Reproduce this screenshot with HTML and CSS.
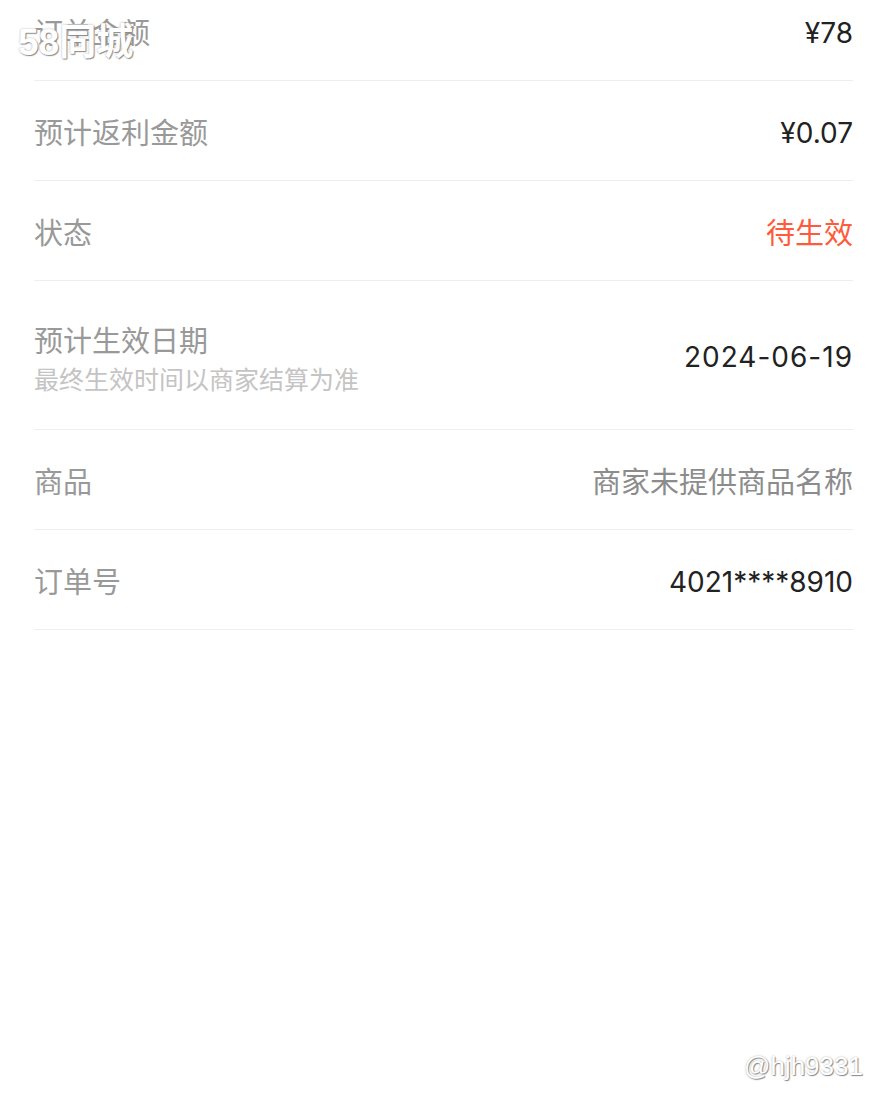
FILE: index.html
```html
<!DOCTYPE html>
<html lang="zh-CN">
<head>
  <meta charset="UTF-8" />
  <title>订单详情</title>
  <link rel="stylesheet" href="styles.css">
</head>
<body>
  <main class="detail-list">
    <div class="row">
      <span class="label">订单金额</span>
      <span class="value">¥78</span>
    </div>
    <div class="row">
      <span class="label">预计返利金额</span>
      <span class="value">¥0.07</span>
    </div>
    <div class="row">
      <span class="label">状态</span>
      <span class="value value-pending">待生效</span>
    </div>
    <div class="row row-tall">
      <div class="label-group">
        <span class="label">预计生效日期</span>
        <span class="sub-label">最终生效时间以商家结算为准</span>
      </div>
      <span class="value value-date">2024-06-19</span>
    </div>
    <div class="row">
      <span class="label">商品</span>
      <span class="value value-muted">商家未提供商品名称</span>
    </div>
    <div class="row">
      <span class="label">订单号</span>
      <span class="value">4021****8910</span>
    </div>
  </main>

  <!-- watermarks from the screenshot -->
  <div class="watermark watermark-top">58同城</div>
  <div class="watermark watermark-bottom">@hjh9331</div>
</body>
</html>
```

FILE: styles.css
```css
/* Basic reset */
* {
  margin: 0;
  padding: 0;
  box-sizing: border-box;
}

body {
  background-color: #ffffff;
  font-family: "Noto Sans CJK SC", "Noto Sans", sans-serif;
  width: 887px;
  height: 1110px;
  overflow: hidden;
  position: relative;
}

/* List of order fields (page is scrolled a bit) */
.detail-list {
  margin-top: -19px;
  padding: 0 34px;
}

.row {
  display: flex;
  justify-content: space-between;
  align-items: center;
  height: 100px;
  border-bottom: 1px solid #eeeeee;
}

.row-tall {
  height: 149px;
}

.label-group {
  display: flex;
  flex-direction: column;
  margin-top: 6px;
}

.label {
  font-size: 29px;
  line-height: 40px;
  color: #999999;
}

.sub-label {
  font-size: 25px;
  line-height: 38px;
  color: #c4c4c4;
}

.value {
  font-family: Inter, "Noto Sans CJK SC", sans-serif;
  font-size: 28px;
  line-height: 40px;
  padding-top: 4px;
  color: #222222;
}

.value-date {
  letter-spacing: 1px;
}

.value-pending {
  font-family: "Noto Sans CJK SC", sans-serif;
  font-size: 29px;
  padding-top: 0;
  color: #ff5a3c;
}

.value-muted {
  font-family: "Noto Sans CJK SC", sans-serif;
  font-size: 29px;
  padding-top: 0;
  color: #8c8c8c;
}

/* Watermarks */
.watermark {
  position: absolute;
  color: #ffffff;
  font-family: "Liberation Sans", "Noto Sans CJK SC", sans-serif;
  text-shadow: 1px 1px 1px #8a8a8a, 0 0 2px #b0b0b0;
}

.watermark-top {
  top: 12px;
  left: 18px;
  font-size: 37px;
  font-weight: bold;
}

.watermark-bottom {
  top: 1051px;
  left: 744px;
  font-size: 26px;
}
```
